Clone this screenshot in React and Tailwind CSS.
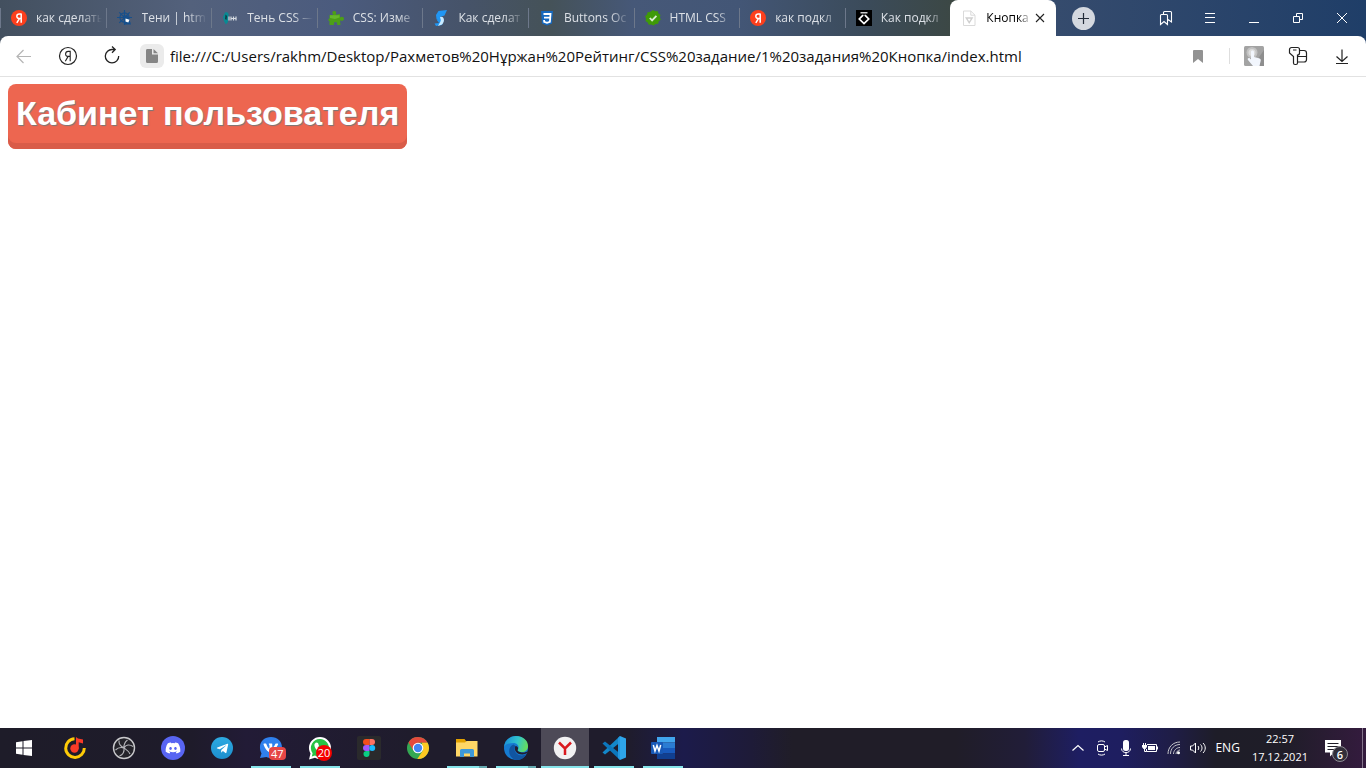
import React from "react";
import { FaDiscord, FaVk, FaTelegramPlane } from "react-icons/fa";

function Svg({ s = 24, className = "", children }) {
  return (
    <svg width={s} height={s} viewBox={`0 0 ${s} ${s}`} fill="none" aria-hidden="true" className={`block shrink-0 ${className}`}>
      {children}
    </svg>
  );
}

/* ---------- tab favicons, 16px ---------- */

const YandexFav = () => (
  <Svg s={16}>
    <circle cx="8" cy="8" r="8" fill="#fc3f1d" />
    <path d="M10.2 3.4v9.4M10.2 4.1H8.3C5.1 4.1 5 8.4 8.1 8.5h2.1M8.4 8.6l-2.6 4.2" stroke="#fff" strokeWidth="1.5" />
  </Svg>
);
const WheelFav = () => (
  <Svg s={16}>
    <circle cx="7.5" cy="7.5" r="4.600" stroke="#17508c" strokeWidth="1.100" />
    <path d="M7.500 0v15M0 7.500h15M2.300 2.300l10.600 10.600M12.700 2.300 2.300 12.900" stroke="#17508c" strokeWidth="1.200" />
    <path d="M6 5.500h5l3 9H7.500z" fill="#17508c" />
    <path d="m8.500 8.500 4 1.200-1.200 2.800-2.800-1z" fill="#fff" />
  </Svg>
);
const FaceFav = () => (
  <Svg s={16}>
    <path d="M3 2.500c2.500-1 4 .5 3.600 3L6 12l-2 2.500-1.800-3L1 7z" fill="#088b93" />
    <path d="M3.500 4.500 5 6l-.5 4-1.500-1z" fill="#123c48" />
    <path d="M7 6.500v4M9 6.500v4M11.500 6.500v4M14 6.500v4M9 8.500h5" stroke="#d7dce3" strokeWidth="1.200" />
  </Svg>
);
const PuzzleFav = () => (
  <Svg s={16}>
    <path d="M1.500 5h3.700C3.700 2.500 4.500 1 6.300 1S8.800 2.500 7.700 4.800L12 4v3.500c2-1.300 4-.5 4 1.300s-2 2.700-4 1.500L12.500 15H9c.6-2-.3-3-1.500-3S5.500 13 6 15H1.500v-4c-1.500.5-1.500-3 0-2.500z" fill="#4c9f16" />
    <path d="M2 5.300h9.500v2.200L7 9 2 8z" fill="#65b82b" />
  </Svg>
);
const SnakeFav = () => (
  <Svg s={16}>
    <path d="M3.500 9.500 8 8.500l2.500 2.500L9 15l-6 1-1.500-2.500L6 13z" fill="#2196f3" />
    <path d="m5 6 4.500 1c2.500 2 1.500 5.500-.5 7.500l-4 1.500 2.500-4.500z" fill="#c9eaff" />
    <path d="M5.500 1 14 0l-2.500 5.500L7 7l1 4-4.500-2L3 5z" fill="#2196f3" />
  </Svg>
);
const Css3Fav = () => (
  <Svg s={16}>
    <path d="M2 1h12l-1 12.5L8 15.5l-5-2z" fill="#1669bf" />
    <path d="M4.500 4h7l-.6 7.800-2.900 1-2.800-1-.1-1.800M5 7.600h6" stroke="#fff" strokeWidth="1.800" />
  </Svg>
);
const CheckFav = () => (
  <Svg s={16}>
    <path d="m8 0 2 1.200 2.500-.1 1 2.300 2 1.500-.6 2.400.9 2.500-2 1.500-.7 2.400-2.500.2L8.500 15.500l-2.300-1-2.500.2-1-2.300-2.200-1.300.6-2.500L0 6.200l1.900-1.500.7-2.500 2.500-.3z" fill="#3f9a08" />
    <path d="m4.800 8 2.300 2.400 4.300-4.600" stroke="#d9ecd0" strokeWidth="1.800" />
  </Svg>
);
const DevFav = () => (
  <Svg s={16}>
    <path d="M0 0h16v16H0z" fill="#000" />
    <path d="M4.500 2.800h7" stroke="#fff" strokeWidth="1.200" />
    <path d="M6.800 5.400 3.300 9l4.700 4.500L12.700 9 9.200 5.400" stroke="#fff" strokeWidth="1.700" />
    <path d="M6 5.400h1.500M8.500 5.400H10" stroke="#fff" strokeWidth="1.400" />
  </Svg>
);
const PageFav = () => (
  <Svg s={16}>
    <path d="M2.500 1h7.300L14 5.200V15.500H2.500zM9.800 1v4.200H14" fill="#fff" stroke="#dadada" />
    <path d="M5.300 8h5.800l-2.900 4.600z" stroke="#cfcfcf" strokeWidth="1.400" />
  </Svg>
);

const tabs = [
  ["как сделать", YandexFav],
  ["Тени | htm", WheelFav],
  ["Тень CSS —", FaceFav],
  ["CSS: Изме", PuzzleFav],
  ["Как сделат", SnakeFav],
  ["Buttons Ос", Css3Fav],
  ["HTML CSS", CheckFav],
  ["как подкл", YandexFav],
  ["Как подкл", DevFav],
];

function TabStrip() {
  return (
    <header className="flex h-9 shrink-0">
      <nav className="flex min-w-0 flex-1 bg-[linear-gradient(90deg,#43505f_0%,#53617c_18%,#4b5b7e_32%,#465369_44%,#455258_52%,#465878_60%,#435676_70%,#3b4b5a_82%,#3c4740_92%,#3a4950_100%)]">
        {tabs.map(([name, Icon], i) => (
          <a key={i} href="#" className="flex min-w-0 flex-1 items-center">
            <span className="h-5 w-px shrink-0 bg-[#6d788b]" />
            <span className="ml-[10px] flex shrink-0"><Icon /></span>
            <span className="mr-1 ml-[9px] min-w-0 flex-1 overflow-hidden text-[12px] leading-5 whitespace-nowrap text-[#dce0e6] mask-r-from-70% mask-r-to-100%">
              {name}
            </span>
          </a>
        ))}
        <div className="flex min-w-0 flex-1 bg-linear-to-r from-[#3c4740] to-[#354b6d] to-50%">
          <div className="flex min-w-0 flex-1 items-center rounded-t-lg bg-white">
            <a href="#" className="flex min-w-0 flex-1 items-center pl-[11px]">
              <PageFav />
              <span className="ml-[9px] min-w-0 flex-1 overflow-hidden text-[12px] leading-5 whitespace-nowrap text-black mask-r-from-70% mask-r-to-100%">
                Кнопка
              </span>
            </a>
            <button aria-label="Закрыть вкладку" className="mr-2 shrink-0">
              <Svg s={16}><path d="m4 4 8 8M12 4l-8 8" stroke="#222" strokeWidth="1.100" /></Svg>
            </button>
          </div>
        </div>
      </nav>
      <div className="flex w-[310px] shrink-0 items-center justify-between bg-linear-to-r from-[#354b6d] to-[#1f3e68] pr-4 pl-4">
        <button aria-label="Новая вкладка" className="grid size-[23px] place-items-center rounded-full bg-[#d4d8df]">
          <Svg s={13}><path d="M6.500 1v11M1 6.500h11" stroke="#222b38" strokeWidth="1.200" /></Svg>
        </button>
        <div className="flex items-center gap-7 text-white">
          <button aria-label="Закладки">
            <Svg s={16}>
              <path d="M2.500 5.500a1 1 0 0 1 1-1h5a1 1 0 0 1 1 1v9L6 11.500l-3.500 3zM5.500 4V2.500a1 1 0 0 1 1-1h6a1 1 0 0 1 1 1v9.500L10 9.500" stroke="currentColor" strokeWidth="1.100" />
            </Svg>
          </button>
          <button aria-label="Меню">
            <Svg s={16}><path d="M3 3.500h10M3 7.500h10M3 12.500h10" stroke="currentColor" /></Svg>
          </button>
          <button aria-label="Свернуть">
            <Svg s={16}><path d="M3 12.500h10" stroke="currentColor" /></Svg>
          </button>
          <button aria-label="Восстановить">
            <Svg s={16}><path d="M3.500 6.500h6v6h-6zM6.500 6.500v-3h6v6h-3" stroke="currentColor" /></Svg>
          </button>
          <button aria-label="Закрыть">
            <Svg s={16}><path d="m3 3 10 10M13 3 3 13" stroke="currentColor" /></Svg>
          </button>
        </div>
      </div>
    </header>
  );
}

function Toolbar() {
  return (
    <div className="shrink-0 bg-[linear-gradient(90deg,#43505f_50%,#1f3e68_50%)]">
      <div className="flex h-[41px] items-center rounded-t-lg border-b border-[#e2e2e2] bg-white pr-[14px] pl-3">
        <button aria-label="Назад">
          <Svg s={24}><path d="M5.500 12.500H19M11.500 6l-6.500 6.500 6.500 6.500" stroke="#b5b5b5" strokeWidth="1.200" /></Svg>
        </button>
        <button aria-label="Яндекс" className="ml-5">
          <Svg s={24}>
            <circle cx="12" cy="12" r="8.500" stroke="#222" strokeWidth="1.200" />
            <path d="M14.200 6.800v10.400M14.200 7.400h-2c-3.300 0-3.500 5-.4 5h2.400M12 12.600l-2.700 4.600" stroke="#222" strokeWidth="1.100" />
          </Svg>
        </button>
        <button aria-label="Обновить" className="ml-5">
          <Svg s={24}>
            <path d="M14.500 5.500h-2A6.700 6.700 0 1 0 18.700 12M12 2.500l3.200 3L12 8.700" stroke="#222" strokeWidth="1.300" />
          </Svg>
        </button>
        <button aria-label="Сведения о странице" className="ml-4 grid size-6 place-items-center rounded-md bg-[#ebebeb]">
          <Svg s={14}>
            <path d="M2 0h5v5.500h6V12.500a1.500 1.500 0 0 1-1.500 1.500H2A1.500 1.500 0 0 1 1 12.500v-11A1.500 1.500 0 0 1 2 0zM8.500 0 13 4.300H8.500z" fill="#858585" />
          </Svg>
        </button>
        <input
          aria-label="Адрес"
          className="ml-[6px] h-7 min-w-0 flex-1 bg-transparent font-['Open_Sans',sans-serif] text-[15px] text-[#111] outline-none"
          defaultValue="file:///C:/Users/rakhm/Desktop/Рахметов%20Нұржан%20Рейтинг/CSS%20задание/1%20задания%20Кнопка/index.html"
        />
        <button aria-label="Добавить в закладки">
          <Svg s={16}><path d="M3 3a1 1 0 0 1 1-1h8a1 1 0 0 1 1 1v12l-5-4-5 4z" fill="#929292" /></Svg>
        </button>
        <span className="mr-[14px] ml-[23px] h-4 w-px bg-[#dedede]" />
        <button aria-label="Расширение">
          <Svg s={20}>
            <rect width="20" height="20" rx="1.500" fill="#a3a3a3" />
            <path d="M20 4v16H9z" fill="#8e8e8e" />
            <circle cx="8" cy="6.500" r="5.500" fill="#c2c2c2" />
            <circle cx="8" cy="6.500" r="3.500" fill="#dcdcdc" />
            <path d="M7 6c0-2 3-2 3 0v5l5 1.200c1.500.4 2 1.300 1.700 2.600L15.500 20H9l-5-6c-1-1.500.7-2.600 2-1.500l1 1z" fill="#f2f6fd" />
          </Svg>
        </button>
        <button aria-label="Пароли" className="ml-6">
          <Svg s={20}>
            <path d="M3.500 1.500h6a2 2 0 0 1 2 2V7a2 2 0 0 1-2 2v8a1.500 1.500 0 0 1-1.500 1.500H7A1.500 1.500 0 0 1 5.500 17V10.500L1.500 7V3.500a2 2 0 0 1 2-2M5 4h3.500" stroke="#222" strokeWidth="1.200" />
            <path d="M11.500 4.500H16a2.500 2.500 0 0 1 2.500 2.500v6.500a2.500 2.500 0 0 1-2.500 2.500H9.500M9.500 10.500h9" stroke="#222" strokeWidth="1.200" />
          </Svg>
        </button>
        <button aria-label="Загрузки" className="ml-6">
          <Svg s={20}><path d="M10 3.500v12M4.500 10.500l5.500 5 5.500-5M4 17.500h12" stroke="#222" strokeWidth="1.200" /></Svg>
        </button>
      </div>
    </div>
  );
}

/* ---------- taskbar icons, 24px ---------- */

const Start = () => (
  <Svg s={16}><path d="M0 2.200 6.500 1.200v6.300H0zM7.500 1 16 0v7.500H7.500zM0 8.500h6.500v6.300L0 13.800zM7.500 8.500H16V16l-8.500-1z" fill="#fff" /></Svg>
);
const Music = () => (
  <Svg>
    <path d="M11.500 2.800A9.300 9.300 0 1 0 21.300 12" stroke="#fecb07" strokeWidth="3" />
    <circle cx="11.500" cy="12.500" r="4.200" fill="#f83b27" />
    <path d="M13 1l2 1.500 5 1v4l-4.300-1.300v6.500H13z" fill="#f83b27" />
  </Svg>
);
const Obs = () => (
  <Svg>
    <circle cx="12" cy="12" r="10.500" fill="#24232a" stroke="#c9c9cc" strokeWidth="1.400" />
    <path d="M7 4.500C6.500 9 9 10.500 12 12c2-3.500 5.500-4 9-1.500M12 12c.5 3.500-1 6.500-4.500 8M12 12c-3-1-6-.5-8.500 2M12 12c-.5-4 1-6 3.500-8M12 12c2 1.500 5 3 6 6" stroke="#b4b4b9" strokeWidth="1.100" />
  </Svg>
);
const Discord = () => (
  <span className="grid size-6 place-items-center rounded-full bg-[#5865f2] text-white"><FaDiscord size={16} /></span>
);
const Telegram = () => (
  <span className="grid size-[22px] place-items-center rounded-full bg-linear-to-b from-[#2daae2] to-[#1d8fce] text-white"><FaTelegramPlane size={13} /></span>
);
const Vk = () => (
  <span className="relative flex">
    <Svg><path d="M12 1c6.500 0 11 4.600 11 10.500S18 22 12 22c-1.700 0-3-.3-4.500-1L1 22l1.500-4.500C-2 8 4 1 12 1z" fill="#2f80ed" /></Svg>
    <FaVk size={16} className="absolute top-1 left-1 text-white" />
    <span className="absolute top-[11px] left-[10px] rounded-[4px] bg-[#e64646] px-[2px] text-[11px] leading-[13px] text-white">47</span>
  </span>
);
const WhatsApp = () => (
  <span className="relative flex">
    <Svg>
      <path d="M12 1a11 11 0 0 1 0 22c-2 0-3.500-.5-5-1.300L1 23.500l1.500-6C-2 9.500 4 1 12 1z" fill="#fff" />
      <path d="M12 3a9 9 0 1 1-5 16.500l-3.200 1 .8-3.300A9 9 0 0 1 12 3z" fill="#26c344" />
      <path d="M8 6.500 10 7l1 3-1.300 1.500 3 3 1.500-1.300 3 1.300-.5 2.300C12 19 5.500 12 6.500 8z" fill="#fff" />
    </Svg>
    <span className="absolute top-[9px] left-2 grid size-4 place-items-center rounded-full bg-[#f40000] text-[11px] leading-4 text-white">20</span>
  </span>
);
const Figma = () => (
  <Svg>
    <rect width="24" height="24" rx="2" fill="#2a2a2c" />
    <path d="M9 3h3.500v6H9a3 3 0 0 1 0-6z" fill="#f24e1e" />
    <path d="M12.500 3H15a3 3 0 0 1 0 6h-2.500z" fill="#ff7262" />
    <path d="M9 9h3.500v6H9a3 3 0 0 1 0-6z" fill="#a259ff" />
    <circle cx="15.200" cy="12" r="3" fill="#1abcfe" />
    <path d="M9 15h3.500v3A3 3 0 1 1 9 15z" fill="#0acf83" />
  </Svg>
);
const Chrome = () => (
  <Svg>
    <circle cx="12" cy="12" r="11" fill="#34a853" />
    <path d="M2.500 6.500A11 11 0 0 1 21.600 6.700H12L7.200 14.500z" fill="#e34a3c" />
    <path d="M21.600 6.700A11 11 0 0 1 11.300 23L16.700 14.700 16 6.700z" fill="#fdc922" />
    <circle cx="12" cy="12" r="5.300" fill="#fff" />
    <circle cx="12" cy="12" r="4.200" fill="#4285f4" />
  </Svg>
);
const Explorer = () => (
  <Svg>
    <path d="M1 3h8.500l1.500 2v4H1z" fill="#e2a100" />
    <path d="M1 6.500h9L11.500 5H22.500v15.500H1z" fill="#ffd766" />
    <path d="M5 21v-6.500a1.500 1.500 0 0 1 1.500-1.500h11a1.500 1.500 0 0 1 1.500 1.500V21h-4v-3.500H9V21z" fill="#3d98d8" />
  </Svg>
);
const Edge = () => (
  <Svg>
    <defs>
      <linearGradient id="edge-top" x1="1" y1="6" x2="23" y2="13" gradientUnits="userSpaceOnUse">
        <stop stopColor="#1c93d8" /><stop offset=".5" stopColor="#31c5cd" /><stop offset="1" stopColor="#69df54" />
      </linearGradient>
    </defs>
    <circle cx="12" cy="12" r="12" fill="#167bd1" />
    <path d="M0 11C.5 4.500 5.500 0 12 0c7 0 12 4.500 12 10 0 4-3 6-6 6s-5-1-4-2.500c1.500-2.500 0-6.500-4.500-6.500C5 7 1 8.500 0 11z" fill="url(#edge-top)" />
    <path d="M9.500 8.500C4 10 3 20 10.500 23.800 16.500 25 21 21.500 22.500 18c-6 3.500-12 0-12-5 0-1.500.5-2.500 1-3z" fill="#1155a1" />
    <path d="M11.500 10c-2 3.500.5 8.500 7 8.500 2 0 3.500-.8 4.500-1.500l1-2c-2 1.500-5 2-8 1-3-.8-2.500-2-2-3 .6-1.300-.8-3-2.500-3z" fill="#221e32" />
  </Svg>
);
const YaBrowser = () => (
  <Svg>
    <circle cx="12" cy="12" r="11.200" fill="#f1f1f2" />
    <path d="m6 6.500 6 6 6-6M12 12v7" stroke="#d91a1f" strokeWidth="2.500" />
  </Svg>
);
const VsCode = () => (
  <Svg>
    <path d="M18 0 24 2.500v19L18 24z" fill="#2ea5ea" />
    <path d="M18 0v6.500L3 18.500.5 16.500z" fill="#1387c9" />
    <path d="M18 24v-6.500L3 5.500.5 7.500z" fill="#0c76bb" />
    <path d="m16 2 2-2v24l-2-2z" fill="#2497de" />
  </Svg>
);
const Word = () => (
  <Svg>
    <path d="M6 1h18v5.500H6z" fill="#41a5ee" /><path d="M6 6.500h18V12H6z" fill="#2b7cd3" />
    <path d="M6 12h18v5.500H6z" fill="#185abd" /><path d="M6 17.500h18V23H6z" fill="#103f91" />
    <rect y="6" width="12" height="12" rx="1" fill="#1859b7" />
    <path d="m2.300 9 1.700 6 2-5.500L8 15l1.700-6" stroke="#fff" strokeWidth="1.500" />
  </Svg>
);

const apps = [
  ["Яндекс Музыка", Music, ""],
  ["OBS", Obs, ""],
  ["Discord", Discord, ""],
  ["Telegram", Telegram, ""],
  ["ВКонтакте", Vk, "open"],
  ["WhatsApp", WhatsApp, "open"],
  ["Figma", Figma, ""],
  ["Chrome", Chrome, ""],
  ["Проводник", Explorer, "multi"],
  ["Edge", Edge, "multi"],
  ["Яндекс Браузер", YaBrowser, "active"],
  ["VS Code", VsCode, "open"],
  ["Word", Word, "open"],
];

function AppButton({ name, Icon, state }) {
  return (
    <button aria-label={name} className={`flex h-10 w-12 flex-col items-center ${state === "active" ? "bg-[#4d4a57]" : ""}`}>
      <span className="grid flex-1 place-items-center pt-[2px]"><Icon /></span>
      <span className={`flex h-[2px] ${state === "active" ? "w-12" : "w-10"}`}>
        {state && <span className="flex-1 bg-[#86e4ea]" />}
        {state === "multi" && <span className="w-2 bg-[#65a9b0]" />}
      </span>
    </button>
  );
}

function Taskbar() {
  return (
    <footer className="flex h-10 shrink-0 items-center justify-between bg-[linear-gradient(90deg,#1e1c29_0%,#1e1b2a_14%,#221b36_18%,#1f1c2c_30%,#1f1c2c_46%,#1c1b4b_50%,#1e1b38_55%,#201d28_58%,#201d28_70%,#211d38_75%,#1e1e62_79%,#1e1e60_82%,#1f1d45_86%,#1e1d28_89%,#1f1d28_94%,#341b3e_100%)] text-white">
      <div className="flex items-center gap-px">
        <button aria-label="Пуск" className="mr-[2px] grid h-10 w-12 place-items-center"><Start /></button>
        {apps.map(([name, Icon, state]) => <AppButton key={name} name={name} Icon={Icon} state={state} />)}
      </div>
      <div className="flex h-10 items-center">
        <div className="flex items-center gap-2">
          <button aria-label="Скрытые значки">
            <Svg s={16}><path d="m2.500 10.500 5.500-5 5.500 5" stroke="#fff" strokeWidth="1.200" /></Svg>
          </button>
          <button aria-label="Камера">
            <Svg s={16}>
              <rect x="3.500" y="4.500" width="7" height="7" rx="1.500" stroke="#fff" />
              <path d="m10.500 7 3-1.500v5l-3-1.500M4 2c2-1.500 5-1.500 7 0M4 14c2 1.500 5 1.500 7 0" stroke="#fff" />
            </Svg>
          </button>
          <button aria-label="Микрофон">
            <Svg s={16}>
              <rect x="5" y="0" width="6" height="11" rx="2.500" fill="#fff" />
              <path d="M3.500 8.500c0 5.500 9 5.500 9 0M8 12.500V15M5 15.500h6" stroke="#fff" />
            </Svg>
          </button>
          <button aria-label="Батарея">
            <Svg s={16}>
              <path d="M5 4.500h9.500v7H4.500V9M15.500 6.500v3" stroke="#fff" />
              <path d="M6 6h7v4H6zM0 5h5v2L3.500 9h-2L0 7z" fill="#fff" /><path d="M1.500 3v2M3.500 3v2M2.500 8v3.500h2" stroke="#fff" />
            </Svg>
          </button>
          <button aria-label="Сеть">
            <Svg s={16}>
              <path d="M2 14C2 7 7 2 14 2M4.500 14c0-5.500 4-9.500 9.500-9.500M7.500 14c0-3.500 3-6.500 6.500-6.500M10 14c0-2 2-4 4-4" stroke="#c5c5cb" />
              <circle cx="12.500" cy="12.800" r="1.500" fill="#fff" />
            </Svg>
          </button>
          <button aria-label="Громкость">
            <Svg s={16}>
              <path d="M.5 6h2l3-3v10l-3-3h-2zM8 6c1 1.200 1 2.800 0 4M10.500 4.500c2 2 2 5 0 7M13 3c3 3 3 7 0 10" stroke="#fff" />
            </Svg>
          </button>
        </div>
        <button className="ml-[9px] text-[12px]">ENG</button>
        <time className="ml-3 flex flex-col items-center text-[11px] leading-[18px]"><span>22:57</span><span>17.12.2021</span></time>
        <button aria-label="Уведомления: 6" className="relative ml-[14px]">
          <Svg>
            <path d="M3 4h16v12.500h-7L8 20.500v-4H3z" fill="#fff" />
            <path d="M5.500 7.500h11M5.500 10.500h11M5.500 13.500h7" stroke="#201d28" />
          </Svg>
          <span className="absolute top-[10px] left-[10px] grid size-4 place-items-center rounded-full border border-[#8d8b93] bg-[#322f3a] text-[11px] leading-4 font-semibold">6</span>
        </button>
        <span className="mr-[3px] ml-4 h-10 w-px bg-[#83738a]" />
      </div>
    </footer>
  );
}

export default function App() {
  return (
    <div className="flex h-screen flex-col overflow-hidden bg-white font-['Open_Sans','Noto_Sans',sans-serif]">
      <TabStrip />
      <Toolbar />
      <main className="flex-1 px-2 pt-[7px]">
        <button className="rounded-lg bg-[#ed6650] px-2 pt-2 pb-[15px] font-['Liberation_Sans',Arial,sans-serif] text-[34px] leading-[42px] font-bold text-white inset-shadow-[0_-6px_0_#d95c49] text-shadow-[1px_1px_1px_#777]">
          Кабинет пользователя
        </button>
      </main>
      <Taskbar />
    </div>
  );
}
